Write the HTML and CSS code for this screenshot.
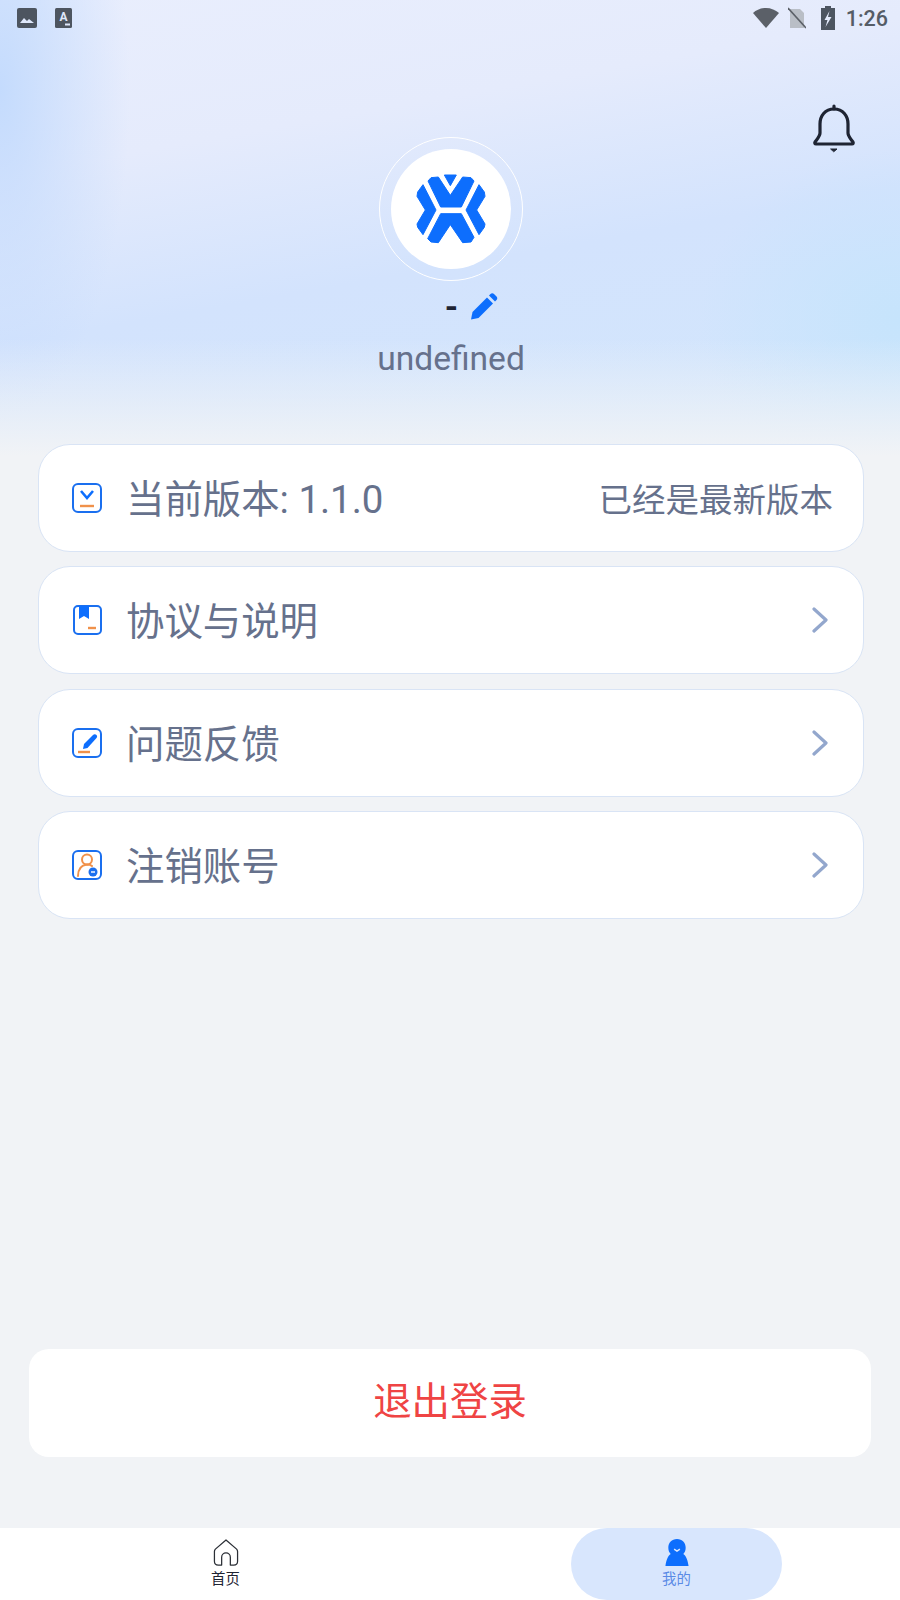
FILE: index.html
```html
<!DOCTYPE html>
<html lang="zh">
<head>
<meta charset="utf-8">
<meta name="viewport" content="width=device-width, initial-scale=1">
<title>我的</title>
<link rel="stylesheet" href="styles.css">
</head>
<body>
<div class="page">

  <!-- status bar -->
  <div class="status">
    <div class="status-left">
      <svg width="20" height="20" viewBox="0 0 20 20"><rect width="20" height="20" rx="2" fill="#4d5560"/><path d="M3 15l4-5 3 3 2-2 5 4z" fill="#dfe8fb"/></svg>
      <svg width="17" height="20" viewBox="0 0 17 20"><rect width="17" height="20" rx="1.5" fill="#4d5560"/><text x="8.500" y="12.500" class="status-a">A</text><rect x="10" y="15.500" width="5" height="2" fill="#dfe8fb"/></svg>
    </div>
    <div class="status-right">
      <svg width="26" height="20" viewBox="0 0 26 20"><path d="M13 20L0 5C3.500 2 8 0 13 0s9.500 2 13 5z" fill="#5b6068"/></svg>
      <svg class="sim" width="18" height="22" viewBox="0 0 18 22"><path d="M2 2h10l4 4v15H2z" fill="#b9bec6"/><path d="M0 1l18 20" stroke="#5b6068" stroke-width="1.600"/></svg>
      <svg class="battery" width="16" height="24" viewBox="0 0 16 24"><path d="M5 0h6v2h4v22H1V2h4z" fill="#4d5560"/><path d="M9.500 5l-5 9h3l-2 7 6-10H8z" fill="#e4ebfc"/></svg>
      <span class="clock">1:26</span>
    </div>
  </div>

  <!-- profile head -->
  <div class="head">
    <svg class="bell" width="44" height="50" viewBox="0 0 44 50" fill="none" stroke="#1e2433" stroke-width="3.200" stroke-linejoin="round" stroke-linecap="round">
      <path d="M22 5c-9 0-14 7-14 15v9c0 3-2 5-5 9-.6 1 0 2 1 2h36c1 0 1.600-1 1-2-3-4-5-6-5-9v-9c0-8-5-15-14-15z"/>
      <path d="M22 2v3"/>
      <path d="M19 45h6l-3 2.500z" fill="#1e2433" stroke-width="1"/>
    </svg>
    <div class="avatar-ring">
      <div class="avatar">
        <svg width="70" height="70" viewBox="165 145 210 210" fill="#0d6efd" stroke="#0d6efd" stroke-width="3" stroke-linejoin="round">
          <path d="M250 148h36l-18 32z"/>
          <path d="M201 166l9-10 22-2 36 55 37-55 25 2 9 10-38 78h-62z"/>
          <path d="M239 264h62l38 71-9 14-25 2-37-54-36 54-22-2-10-10z"/>
          <path d="M186 177l39 76-39 74-16-22-2-10 25-42-25-41 2-13z"/>
          <path d="M354 177l-39 76 39 74 16-22 2-10-25-42 25-41-2-13z"/>
        </svg>
      </div>
    </div>
    <div class="name-row">
      <span class="name">-</span>
      <svg width="28" height="27" viewBox="0 0 28 27" fill="#0d6efd"><path d="M1 26.500l1.500-7.500L17 4.500l6 6L8.500 25z"/><path d="M19 2.500l1.500-1.500c1-1 2.500-1 3.500 0l2.500 2.500c1 1 1 2.500 0 3.500L25 8.500z"/></svg>
    </div>
    <div class="phone">undefined</div>
  </div>

  <!-- menu -->
  <div class="menu">
    <div class="row">
      <svg class="row-icon" width="30" height="30" viewBox="0 0 30 30" fill="none">
        <rect x="1" y="1" width="28" height="28" rx="5" stroke="#1a6fef" stroke-width="2"/>
        <path d="M9 8l6 7 6-7" stroke="#0d6efd" stroke-width="2.600"/>
        <path d="M8 23h14" stroke="#f0914a" stroke-width="2.400"/>
      </svg>
      <span class="row-text">当前版本: 1.1.0</span>
      <span class="row-note">已经是最新版本</span>
    </div>
    <div class="row">
      <svg class="row-icon" width="30" height="30" viewBox="0 0 30 30" fill="none">
        <rect x="2" y="1" width="27" height="28" rx="4" stroke="#1a6fef" stroke-width="2"/>
        <path d="M7 1h10v13l-5-3-5 3z" fill="#0d6efd"/>
        <path d="M16 23h8" stroke="#f0914a" stroke-width="2.400"/>
      </svg>
      <span class="row-text">协议与说明</span>
      <svg class="chevron" width="16" height="26" viewBox="0 0 16 26" fill="none"><path d="M2 2l12 11L2 24" stroke="#93a7cd" stroke-width="3.200" stroke-linecap="round" stroke-linejoin="round"/></svg>
    </div>
    <div class="row">
      <svg class="row-icon" width="30" height="30" viewBox="0 0 30 30" fill="none">
        <rect x="1" y="1" width="28" height="28" rx="5" stroke="#1a6fef" stroke-width="2"/>
        <path d="M12 16l9-9c1-1 2.500-1 3.500 0 .8 1 .8 2 0 3l-9 10-4.500 1z" fill="#0d6efd"/>
        <path d="M6 24h12" stroke="#f0914a" stroke-width="2.400"/>
      </svg>
      <span class="row-text">问题反馈</span>
      <svg class="chevron" width="16" height="26" viewBox="0 0 16 26" fill="none"><path d="M2 2l12 11L2 24" stroke="#93a7cd" stroke-width="3.200" stroke-linecap="round" stroke-linejoin="round"/></svg>
    </div>
    <div class="row">
      <svg class="row-icon" width="30" height="30" viewBox="0 0 30 30" fill="none">
        <rect x="1" y="1" width="28" height="28" rx="5" stroke="#1a6fef" stroke-width="2"/>
        <circle cx="15" cy="9.500" r="5" stroke="#f0914a" stroke-width="2"/>
        <path d="M6 26c0-6 3-11 9-11.500 2 0 4 .5 5 1.500" stroke="#f0914a" stroke-width="2" stroke-linecap="round"/>
        <circle cx="21" cy="22" r="4.500" fill="#1a6fef"/>
        <path d="M19 22h4" stroke="#fff" stroke-width="1.400"/>
      </svg>
      <span class="row-text">注销账号</span>
      <svg class="chevron" width="16" height="26" viewBox="0 0 16 26" fill="none"><path d="M2 2l12 11L2 24" stroke="#93a7cd" stroke-width="3.200" stroke-linecap="round" stroke-linejoin="round"/></svg>
    </div>
  </div>

  <div class="logout"><span>退出登录</span></div>

  <!-- tab bar -->
  <div class="tabs">
    <div class="tab">
      <svg width="26" height="27" viewBox="0 0 26 28" fill="none" stroke="#2b2f36" stroke-width="1.300" stroke-linejoin="round"><path d="M13 1L2 10.500c-.8.800-1 1.500-1 2.500v10c0 2.500 1.500 4 4 4h3.500v-8c0-2.500 2-4.500 4.500-4.500s4.500 2 4.500 4.500v8H21c2.500 0 4-1.500 4-4V13c0-1-.2-1.700-1-2.500z"/></svg>
      <span class="tab-label">首页</span>
    </div>
    <div class="tab tab-active">
      <svg width="24" height="27" viewBox="0 0 24 28"><path d="M12 0c5.500 0 9 4 9 9 0 3-1 5-2.500 6.500 3 2 4.500 6 5.500 12.500H0c1-6.500 2.500-10.500 5.500-12.500C4 14 3 12 3 9c0-5 3.500-9 9-9z" fill="#0d6efd"/><path d="M9 10.500l3 2 3-2" fill="none" stroke="#dbe7fd" stroke-width="1.500"/></svg>
      <span class="tab-label">我的</span>
    </div>
  </div>
</div>
</body>
</html>
```

FILE: styles.css
```css
* {
	box-sizing: border-box;
}
body {
	margin: 0;
	background-color: #f1f3f6;
	font-family: Roboto, "Noto Sans CJK SC", sans-serif;
}
/* whole screen, the soft blue wash sits in the top 470px */
.page {
	display: flex;
	flex-direction: column;
	height: 1600px;
	background-color: #f1f3f6;
	background-image:
		linear-gradient(to bottom, rgba(241,243,246,0) 72%, #f1f3f6 97%),
		radial-gradient(ellipse 130px 330px at 0 90px, #c4dbfd 0%, rgba(196,219,253,0) 100%),
		radial-gradient(ellipse 200px 170px at 900px 320px, #c6e4fc 0%, rgba(198,228,252,0) 100%),
		linear-gradient(170deg, #e9eefd 0%, #e5ebfc 28%, #d3e3fd 55%, #d2e7fc 100%);
	background-size: 100% 470px;
	background-repeat: no-repeat;
}

/* status bar */
.status {
	display: flex;
	justify-content: space-between;
	align-items: center;
	height: 36px;
	padding: 0 12px 0 17px;
}
.status-left, .status-right {
	display: flex;
	align-items: center;
}
.status-left {
	gap: 18px;
}
.status-a {
	font-size: 12px;
	font-weight: 700;
	fill: #dfe8fb;
	text-anchor: middle;
}
.sim {
	margin-left: 9px;
}
.battery {
	margin-left: 14px;
}
.clock {
	margin-left: 10px;
	font-size: 21.500px;
	font-weight: 500;
	color: #555c66;
}

/* profile head */
.head {
	position: relative;
	display: flex;
	flex-direction: column;
	align-items: center;
	height: 408px;
	padding: 101px 0 0 2px;
}
.bell {
	position: absolute;
	top: 68px;
	right: 44px;
}
.avatar-ring {
	display: flex;
	align-items: center;
	justify-content: center;
	width: 144px;
	height: 144px;
	border: 1.500px solid #fff;
	border-radius: 50%;
}
.avatar {
	display: flex;
	align-items: center;
	justify-content: center;
	width: 120px;
	height: 120px;
	background-color: #fff;
	border-radius: 50%;
}
.name-row {
	display: flex;
	align-items: center;
	gap: 12px;
	height: 40px;
	margin-top: 5px;
	padding-left: 41px;
}
.name {
	font-size: 34px;
	font-weight: 700;
	color: #1e2433;
}
.phone {
	margin-top: 9px;
	font-size: 33.600px;
	line-height: 48px;
	color: #66718c;
}

/* menu cards */
.menu {
	display: flex;
	flex-direction: column;
	gap: 14.400px;
	margin: 0 36px 0 38px;
}
.row {
	display: flex;
	align-items: center;
	height: 108px;
	padding: 0 30px 0 33px;
	background-color: #fff;
	border: 1px solid #d9e4f5;
	border-radius: 32px;
}
.row-icon {
	flex-shrink: 0;
}
.row-text {
	flex: 1;
	margin-left: 24px;
	padding-bottom: 4px;
	font-size: 38.400px;
	color: #66718c;
}
.row-note {
	padding-bottom: 2px;
	font-size: 33.500px;
	color: #66718c;
}
.chevron {
	margin-right: 5px;
}

.logout {
	display: flex;
	align-items: center;
	justify-content: center;
	height: 108px;
	margin: auto 29px 71px 29px;
	padding-bottom: 11px;
	background-color: #fff;
	border-radius: 20px;
	font-size: 38.400px;
	color: #ef4444;
}

/* tab bar */
.tabs {
	display: flex;
	height: 72px;
	background-color: #fff;
}
.tab {
	flex: 0 0 auto;
	display: flex;
	flex-direction: column;
	align-items: center;
	justify-content: center;
	width: 211px;
	margin-left: 120px;
	color: #1e2433;
}
.tab-active {
	margin-left: 240px;
	background-color: #d8e6fd;
	border-radius: 36px;
	color: #5a8ae6;
}
.tab-label {
	margin-top: 3px;
	padding-top: 1px;
	font-size: 14.400px;
	line-height: 20px;
	height: 21px;
}
```
